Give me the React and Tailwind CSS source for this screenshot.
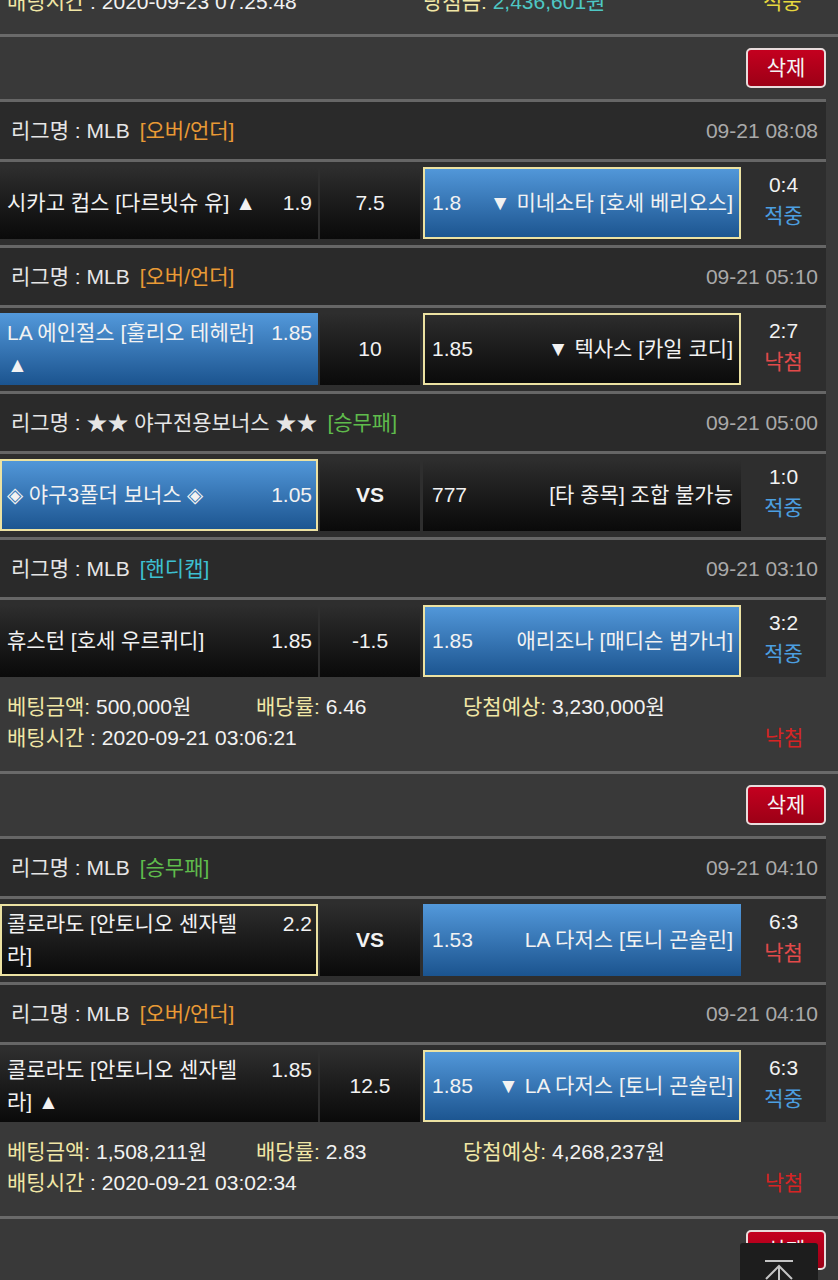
import { Fragment } from 'react';

const bets = [
  {
    games: [
      {
        type: '[오버/언더]',
        typeColor: 'text-[#e99a35]',
        league: 'MLB',
        time: '09-21 08:08',
        home: { name: '시카고 컵스 [다르빗슈 유] ▲', odds: '1.9' },
        mid: '7.5',
        away: { name: '▼ 미네소타 [호세 베리오스]', odds: '1.8', win: true, pick: true },
        score: '0:4',
        result: '적중'
      },
      {
        type: '[오버/언더]',
        typeColor: 'text-[#e99a35]',
        league: 'MLB',
        time: '09-21 05:10',
        home: { name: 'LA 에인절스 [훌리오 테헤란] ▲', odds: '1.85', win: true },
        mid: '10',
        away: { name: '▼ 텍사스 [카일 코디]', odds: '1.85', pick: true },
        score: '2:7',
        result: '낙첨'
      },
      {
        type: '[승무패]',
        typeColor: 'text-[#5fbb4c]',
        league: '★★ 야구전용보너스 ★★',
        time: '09-21 05:00',
        home: { name: '◈ 야구3폴더 보너스 ◈', odds: '1.05', win: true, pick: true },
        mid: 'VS',
        away: { name: '[타 종목] 조합 불가능', odds: '777' },
        score: '1:0',
        result: '적중'
      },
      {
        type: '[핸디캡]',
        typeColor: 'text-[#3dbfd0]',
        league: 'MLB',
        time: '09-21 03:10',
        home: { name: '휴스턴 [호세 우르퀴디]', odds: '1.85' },
        mid: '-1.5',
        away: { name: '애리조나 [매디슨 범가너]', odds: '1.85', win: true, pick: true },
        score: '3:2',
        result: '적중'
      }
    ],
    amount: '500,000원',
    rate: '6.46',
    expect: '3,230,000원',
    time: '2020-09-21 03:06:21'
  },
  {
    games: [
      {
        type: '[승무패]',
        typeColor: 'text-[#5fbb4c]',
        league: 'MLB',
        time: '09-21 04:10',
        home: { name: '콜로라도 [안토니오 센자텔라]', odds: '2.2', pick: true },
        mid: 'VS',
        away: { name: 'LA 다저스 [토니 곤솔린]', odds: '1.53', win: true },
        score: '6:3',
        result: '낙첨'
      },
      {
        type: '[오버/언더]',
        typeColor: 'text-[#e99a35]',
        league: 'MLB',
        time: '09-21 04:10',
        home: { name: '콜로라도 [안토니오 센자텔라] ▲', odds: '1.85' },
        mid: '12.5',
        away: { name: '▼ LA 다저스 [토니 곤솔린]', odds: '1.85', win: true, pick: true },
        score: '6:3',
        result: '적중'
      }
    ],
    amount: '1,508,211원',
    rate: '2.83',
    expect: '4,268,237원',
    time: '2020-09-21 03:02:34'
  }
];

function Sep({ full }) {
  return <div className={full ? 'h-[3px] w-full bg-[#6a6a6a]' : 'h-[3px] w-[826px] bg-[#666666]'} />;
}

function cellClass(side) {
  const bg = side.win
    ? 'bg-linear-to-b from-[#5399db] to-[#1b548f]'
    : 'bg-linear-to-b from-[#2e2e2e] to-[#0a0a0a]';
  const border = side.pick ? 'border-2 border-[#ece2a2]' : 'border-2 border-transparent';
  return `${bg} bg-origin-border ${border} h-[72px] flex items-center`;
}

function HomeCell({ side }) {
  return (
    <div className={`${cellClass(side)} w-[318px] pl-[5px] pr-[4px]`}>
      <div className="flex w-full items-start justify-between leading-[32px]">
        <span className="w-[250px]">{side.name}</span>
        <span className="text-right">{side.odds}</span>
      </div>
    </div>
  );
}

function AwayCell({ side }) {
  return (
    <div className={`${cellClass(side)} w-[318px] pl-[7px] pr-[6px]`}>
      <div className="flex w-full items-start justify-between leading-[32px]">
        <span>{side.odds}</span>
        <span className="ml-4 text-right">{side.name}</span>
      </div>
    </div>
  );
}

function Game({ g, last }) {
  return (
    <>
      <Sep />
      <div className="flex h-[57px] w-[826px] items-center justify-between bg-[#2a2a2a] pl-[11px] pr-[8px]">
        <div className="text-[#e6e6e6]">
          리그명 : {g.league}
          <span className={`ml-[10px] ${g.typeColor}`}>{g.type}</span>
        </div>
        <div className="text-[#a9a9a9]">{g.time}</div>
      </div>
      <Sep />
      <div className={`flex w-[826px] bg-[#2e2e2e] pt-[5px] ${last ? 'pb-0' : 'pb-[6px]'}`}>
        <HomeCell side={g.home} />
        <div className="ml-[2px] flex h-[72px] w-[100px] items-center justify-center bg-linear-to-b from-[#2e2e2e] to-[#0a0a0a]">
          <span className={g.mid === 'VS' ? 'font-bold' : ''}>{g.mid}</span>
        </div>
        <div className="ml-[3px]">
          <AwayCell side={g.away} />
        </div>
        <div className="flex flex-1 flex-col items-center justify-center pb-[6px] leading-[31px]">
          <span>{g.score}</span>
          <span className={g.result === '적중' ? 'text-[#4c9fe0]' : 'text-[#e24a4a]'}>{g.result}</span>
        </div>
      </div>
    </>
  );
}

function DeleteRow() {
  return (
    <div className="flex h-[62px] w-[826px] items-center justify-end">
      <button className="h-[40px] w-[80px] rounded-[5px] border-2 border-[#e8dcdc] bg-linear-to-b from-[#c4001f] to-[#9c0016] text-[#f4f4f4]">
        삭제
      </button>
    </div>
  );
}

function Summary({ bet }) {
  return (
    <div className="pt-[14px] pb-[18px] pl-[7px] leading-[31px]">
      <div className="flex">
        <div className="w-[249px]">
          <span className="text-[#f1e7a6]">베팅금액:</span> {bet.amount}
        </div>
        <div className="w-[207px]">
          <span className="text-[#f1e7a6]">배당률:</span> {bet.rate}
        </div>
        <div>
          <span className="text-[#f1e7a6]">당첨예상:</span> {bet.expect}
        </div>
      </div>
      <div className="flex w-[819px] justify-between">
        <div>
          <span className="text-[#f1e7a6]">배팅시간</span> : {bet.time}
        </div>
        <div className="w-[84px] text-center text-[#d62424]">낙첨</div>
      </div>
    </div>
  );
}

export default function App() {
  return (
    <div className="h-[1280px] w-[838px] overflow-hidden bg-[#393939] font-['Liberation_Sans','Noto_Sans_CJK_KR',sans-serif] text-[21px] text-[#f2f2f2]">
      <div className="h-[34px] overflow-hidden pl-[7px]">
        <div className="-mt-[14px] flex leading-[31px]">
          <div className="w-[416px]">
            <span className="text-[#f1e7a6]">배팅시간</span> : 2020-09-23 07:25:48
          </div>
          <div className="w-[340px]">
            <span className="text-[#f1e7a6]">당첨금:</span> <span className="text-[#4ec7c4]">2,436,601원</span>
          </div>
          <div className="text-[#e6d83e]">적중</div>
        </div>
      </div>
      <Sep full />
      <DeleteRow />
      {bets.map((bet, i) => (
        <Fragment key={i}>
          {bet.games.map((g, j) => (
            <Game key={j} g={g} last={j === bet.games.length - 1} />
          ))}
          <Summary bet={bet} />
          <Sep full />
          <DeleteRow />
        </Fragment>
      ))}
      <div className="fixed right-[20px] bottom-[-23px] flex h-[60px] w-[78px] items-start justify-center rounded-t-[3px] bg-[#1d1d1d] pt-[17px]">
        <svg width="32" height="30" viewBox="0 0 32 30" fill="none" stroke="#c4c4c4" strokeWidth="2">
          <line x1="2" y1="1" x2="30" y2="1" />
          <line x1="16" y1="6" x2="16" y2="30" />
          <polyline points="3,19 16,6 29,19" />
        </svg>
      </div>
    </div>
  );
}
